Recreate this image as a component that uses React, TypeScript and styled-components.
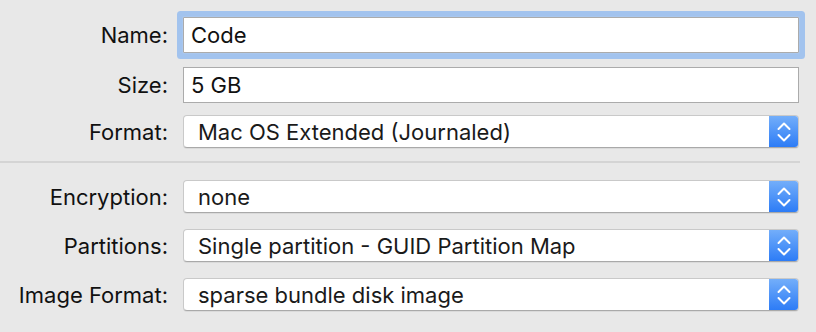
import styled, { createGlobalStyle } from "styled-components";

const Global = createGlobalStyle`
  html, body {
    margin: 0;
    padding: 0;
    background: #e8e8e8;
  }
  body {
    font-family: "Inter", "Liberation Sans", sans-serif;
    -webkit-font-smoothing: antialiased;
  }
`;

const Panel = styled.div`
  width: 816px;
  height: 332px;
  background: #e8e8e8;
  padding-top: 17px;
  box-sizing: border-box;
  overflow: hidden;
`;

const Row = styled.div<{ $gap?: number }>`
  display: flex;
  align-items: center;
  margin-top: ${({ $gap }) => $gap ?? 0}px;
`;

const Label = styled.div`
  width: 183px;
  text-align: right;
  font-size: 22px;
  color: #111;
  padding-right: 15px;
  box-sizing: border-box;
  flex-shrink: 0;
`;

const TextField = styled.div<{ $focused?: boolean }>`
  width: 616px;
  height: 36px;
  box-sizing: border-box;
  background: #fff;
  border: 1px solid #ababab;
  padding-left: 7px;
  display: flex;
  align-items: center;
  font-size: 22px;
  color: #111;
  box-shadow: ${({ $focused }) =>
    $focused ? "0 0 0 1px #a9c7ee, 0 0 0 6px #a2c3ee" : "none"};
  border-radius: ${({ $focused }) => ($focused ? "1px" : "0")};
`;

const Popup = styled.div`
  width: 616px;
  height: 33px;
  box-sizing: border-box;
  background: #fff;
  border-radius: 4px;
  border: 1px solid #c9c9c9;
  border-bottom-color: #a9a9a9;
  box-shadow: 0 1px 0 rgba(0, 0, 0, 0.06);
  display: flex;
  align-items: center;
  overflow: hidden;
`;

const PopupText = styled.span`
  flex: 1;
  padding-left: 14px;
  font-size: 22px;
  color: #1a1a1a;
  white-space: nowrap;
`;

const Stepper = styled.div`
  width: 29px;
  height: 100%;
  background: linear-gradient(#73aefa, #2d7cf6);
  display: flex;
  align-items: center;
  justify-content: center;
`;

const Separator = styled.div`
  width: 800px;
  height: 2px;
  background: #d4d4d4;
  margin-top: 13px;
  margin-bottom: 17px;
`;

function Chevrons() {
  return (
    <svg width="16" height="24" viewBox="0 0 16 24">
      <path
        d="M2.5 9 L8 3.5 L13.5 9 M2.5 15 L8 20.5 L13.5 15"
        fill="none"
        stroke="#fff"
        strokeWidth="2"
        strokeLinecap="round"
        strokeLinejoin="round"
      />
    </svg>
  );
}

function PopupButton({ value }: { value: string }) {
  return (
    <Popup>
      <PopupText>{value}</PopupText>
      <Stepper>
        <Chevrons />
      </Stepper>
    </Popup>
  );
}

export default function App() {
  return (
    <>
      <Global />
      <Panel>
        <Row>
          <Label>Name:</Label>
          <TextField $focused>Code</TextField>
        </Row>
        <Row $gap={14}>
          <Label>Size:</Label>
          <TextField>5 GB</TextField>
        </Row>
        <Row $gap={12}>
          <Label>Format:</Label>
          <PopupButton value="Mac OS Extended (Journaled)" />
        </Row>
        <Separator />
        <Row>
          <Label>Encryption:</Label>
          <PopupButton value="none" />
        </Row>
        <Row $gap={16}>
          <Label>Partitions:</Label>
          <PopupButton value="Single partition - GUID Partition Map" />
        </Row>
        <Row $gap={16}>
          <Label>Image Format:</Label>
          <PopupButton value="sparse bundle disk image" />
        </Row>
      </Panel>
    </>
  );
}
